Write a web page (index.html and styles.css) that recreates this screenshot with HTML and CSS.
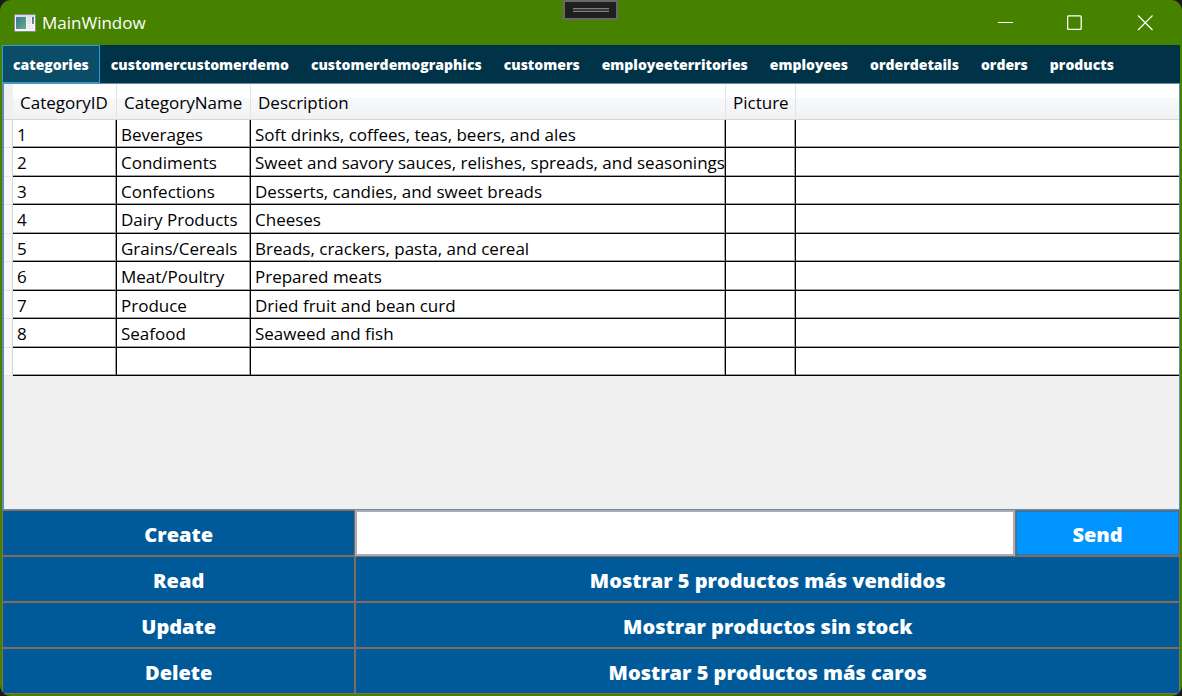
FILE: index.html
```html
<!DOCTYPE html>
<html lang="es">
<head>
<meta charset="utf-8">
<title>MainWindow</title>
<link rel="stylesheet" href="styles.css">
</head>
<body>
<div class="window">
  <header class="titlebar">
    <svg class="app-icon" width="22" height="18" viewBox="0 0 22 18" aria-hidden="true">
      <defs><linearGradient id="pane" x1="0" y1="0" x2="1" y2="1"><stop offset="0" stop-color="#3b6f9c"/><stop offset="1" stop-color="#62b580"/></linearGradient></defs>
      <rect x="0.5" y="0.5" width="21" height="17" fill="#f4f4f6" stroke="#8a8f86"/>
      <rect x="1" y="1" width="20" height="2" fill="#d9dce0"/>
      <rect x="2" y="3" width="10" height="12" fill="url(#pane)"/>
      <rect x="13" y="3" width="4" height="7" fill="#e4e4ea"/>
      <rect x="18" y="3" width="2" height="7" fill="url(#pane)"/>
      <rect x="13" y="11" width="7" height="4" fill="#ececf0"/>
    </svg>
    <h1 class="title">MainWindow</h1>
    <div class="captions">
      <button type="button" class="caption" aria-label="Minimizar"><svg width="16" height="16" viewBox="0 0 16 16"><path d="M1 7.5H16" stroke="#fff" fill="none"/></svg></button>
      <button type="button" class="caption" aria-label="Maximizar"><svg width="16" height="16" viewBox="0 0 16 16"><rect x="0.6" y="0.8" width="13.6" height="13.6" rx="1" stroke="#fff" stroke-width="1.3" fill="none"/></svg></button>
      <button type="button" class="caption" aria-label="Cerrar"><svg width="16" height="16" viewBox="0 0 16 16"><path d="M1 0.5L15.5 15M15.5 0.5L1 15" stroke="#fff" stroke-width="1.2" fill="none"/></svg></button>
    </div>
    <div class="debug-grip"><span class="grip-lines"></span></div>
  </header>
  <nav class="tabs">
    <button type="button" class="tab active">categories</button>
    <button type="button" class="tab">customercustomerdemo</button>
    <button type="button" class="tab">customerdemographics</button>
    <button type="button" class="tab">customers</button>
    <button type="button" class="tab">employeeterritories</button>
    <button type="button" class="tab">employees</button>
    <button type="button" class="tab">orderdetails</button>
    <button type="button" class="tab">orders</button>
    <button type="button" class="tab">products</button>
  </nav>
  <main class="grid-area">
    <table class="data">
      <colgroup><col class="c-mark"><col class="c-id"><col class="c-name"><col class="c-desc"><col class="c-pic"><col></colgroup>
      <thead><tr><td class="mark"></td><th>CategoryID</th><th>CategoryName</th><th>Description</th><th>Picture</th><td class="rest"></td></tr></thead>
      <tbody>
        <tr><td class="mark"></td><td>1</td><td>Beverages</td><td>Soft drinks, coffees, teas, beers, and ales</td><td></td><td class="rest"></td></tr>
        <tr><td class="mark"></td><td>2</td><td>Condiments</td><td>Sweet and savory sauces, relishes, spreads, and seasonings</td><td></td><td class="rest"></td></tr>
        <tr><td class="mark"></td><td>3</td><td>Confections</td><td>Desserts, candies, and sweet breads</td><td></td><td class="rest"></td></tr>
        <tr><td class="mark"></td><td>4</td><td>Dairy Products</td><td>Cheeses</td><td></td><td class="rest"></td></tr>
        <tr><td class="mark"></td><td>5</td><td>Grains/Cereals</td><td>Breads, crackers, pasta, and cereal</td><td></td><td class="rest"></td></tr>
        <tr><td class="mark"></td><td>6</td><td>Meat/Poultry</td><td>Prepared meats</td><td></td><td class="rest"></td></tr>
        <tr><td class="mark"></td><td>7</td><td>Produce</td><td>Dried fruit and bean curd</td><td></td><td class="rest"></td></tr>
        <tr><td class="mark"></td><td>8</td><td>Seafood</td><td>Seaweed and fish</td><td></td><td class="rest"></td></tr>
        <tr><td class="mark"></td><td></td><td></td><td></td><td></td><td class="rest"></td></tr>
      </tbody>
    </table>
  </main>
  <section class="actions">
    <button type="button" class="action">Create</button>
    <input class="query" type="text" aria-label="Consulta">
    <button type="button" class="action send">Send</button>
    <button type="button" class="action">Read</button>
    <button type="button" class="action wide">Mostrar 5 productos más vendidos</button>
    <button type="button" class="action">Update</button>
    <button type="button" class="action wide">Mostrar productos sin stock</button>
    <button type="button" class="action">Delete</button>
    <button type="button" class="action wide">Mostrar 5 productos más caros</button>
  </section>
</div>
</body>
</html>
```
FILE: styles.css
```css
* { box-sizing: border-box; }

body {
  margin: 0;
  background: #1c1c1c;
  font-family: "Open Sans", "Noto Sans", sans-serif;
  font-size: 17px;
}

button, input { font: inherit; margin: 0; border-radius: 0; }

.window {
  display: flex;
  flex-direction: column;
  height: 100vh;
  padding: 0 2px 2px;
  background: #468200;
  border-radius: 11px;
  overflow: hidden;
}

.titlebar {
  position: relative;
  display: flex;
  flex: none;
  align-items: center;
  height: 45px;
  padding-left: 12px;
  color: #fff;
}

.title {
  margin: 0 0 0 6px;
  font-size: 17px;
  font-weight: 400;
}

.captions {
  display: flex;
  margin-left: auto;
}

.caption {
  display: flex;
  align-items: center;
  justify-content: center;
  width: 70px;
  height: 45px;
  padding: 0;
  border: 0;
  background: none;
}

.debug-grip {
  position: absolute;
  top: 0;
  left: calc(50% - 28px);
  display: flex;
  align-items: center;
  justify-content: center;
  width: 55px;
  height: 20px;
  border: 2px solid #686868;
  background: #1f1f1f;
}

.grip-lines {
  width: 36px;
  height: 4px;
  border: solid #808080;
  border-width: 1px 0;
  background: #3a3a3a;
}

.tabs {
  display: flex;
  flex: none;
  height: 38px;
  background: #003347;
}

.tab {
  padding: 1px 10px 0;
  border: 1px solid transparent;
  background: none;
  color: #fff;
  font-size: 14px;
  font-weight: 800;
}

.tab.active {
  border-color: #26a0da;
  background: #0b4d68;
}

.grid-area {
  flex: 1;
  min-height: 0;
  border: 1px solid #688caf;
  border-left-width: 2px;
  background: #f0f0f0;
  overflow: hidden;
}

.data {
  width: 100%;
  table-layout: fixed;
  border-collapse: separate;
  border-spacing: 0;
  background: #fff;
}

.c-mark { width: 9px; }
.c-id { width: 104px; }
.c-name { width: 134px; }
.c-desc { width: 475px; }
.c-pic { width: 70px; }

.data th, .data td {
  padding: 2px 0 0 4px;
  line-height: 24px;
  text-align: left;
  font-weight: 400;
  white-space: nowrap;
}

.data thead th, .data thead td {
  height: 36px;
  padding-left: 7px;
  border-right: 1px solid #e2e3e5;
  border-bottom: 1px solid #d5d5d5;
  background: linear-gradient(#fff 40%, #f7f8fa 41%, #f1f2f4);
}

.data tbody td {
  height: 28px;
  border-right: 1px solid #000;
  border-bottom: 1px solid #000;
  box-shadow: inset -1px -1px #a0a0a0;
}

.data tbody tr:nth-child(even) td { height: 29px; }

.data tbody td.mark {
  padding: 0;
  border-right-color: #d5d5d5;
  border-bottom-color: #e6e6e8;
  background: #f8f8fa;
  box-shadow: none;
}

.data .rest, .data thead .rest { border-right: 0; }

.data tbody .rest { box-shadow: inset 0 -1px #a0a0a0; }

.data thead .mark {
  padding: 0;
  border-right: 0;
  background: #f0f0f0;
}

.actions {
  display: grid;
  flex: none;
  grid-template-columns: 30fr 56fr 14fr;
  grid-auto-rows: 46px;
}

.action {
  padding: 2px 0 0;
  border: 1px solid #707070;
  background: #005a9a;
  box-shadow: inset 0 0 0 1px #1c5480;
  color: #fff;
  font-size: 20px;
  font-weight: 800;
}

.send {
  background: #0095ff;
  box-shadow: inset 0 0 0 1px #2a76b4;
}

.wide { grid-column: span 2; }

.query {
  width: 100%;
  border: 2px solid #abadb3;
  padding: 0 8px;
  background: #fff;
}
```
